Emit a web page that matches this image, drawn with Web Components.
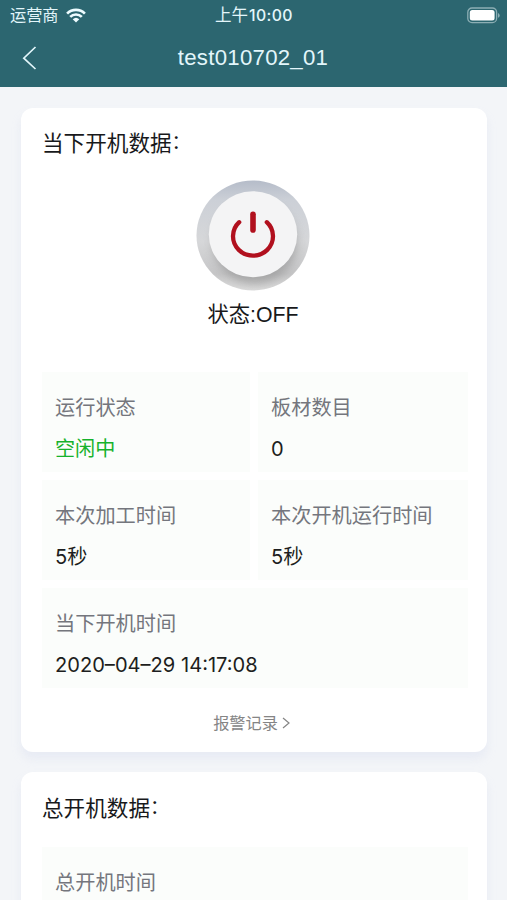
<!DOCTYPE html>
<html lang="zh-CN">
<head>
<meta charset="utf-8">
<meta name="viewport" content="width=device-width">
<title>test010702_01</title>
<style>
html,body{margin:0;height:900px;overflow:hidden;background:#f3f5f8}
body{font-family:Inter,"Noto Sans CJK SC",sans-serif;color:#1b1b1c}
</style>
</head>
<body>
<device-page>
  <status-bar slot="top"></status-bar>
  <nav-bar slot="top">test010702_01</nav-bar>
  <data-card style="height:644px">
    <span slot="title">当下开机数据</span>
    <power-switch>状态:OFF</power-switch>
    <tile-grid>
      <data-tile label="运行状态" style="--value:#16b22c">空闲中</data-tile>
      <data-tile label="板材数目">0</data-tile>
      <data-tile label="本次加工时间">5秒</data-tile>
      <data-tile label="本次开机运行时间">5秒</data-tile>
      <data-tile label="当下开机时间" wide>2020–04–29 14:17:08</data-tile>
    </tile-grid>
    <more-link>报警记录</more-link>
  </data-card>
  <data-card style="height:400px;padding-top:21px">
    <span slot="title">总开机数据</span>
    <tile-grid style="margin-top:24px">
      <data-tile label="总开机时间" wide></data-tile>
    </tile-grid>
  </data-card>
</device-page>
<script>
function define(name, html){
  customElements.define(name, class extends HTMLElement{
    constructor(){
      super();
      const root=this.attachShadow({mode:'open'});
      root.innerHTML=html;
      const label=root.querySelector('.label');
      if(label) label.textContent=this.getAttribute('label');
    }
  });
}
define('device-page',`<style>
:host{display:flex;flex-direction:column;height:900px;overflow:hidden}
header{flex:none;height:87px;background:#2c6670;color:#e3f6fb}
main{display:flex;flex-direction:column;gap:20px;padding:21px 20px 0 21px}
</style><header><slot name="top"></slot></header><main><slot></slot></main>`);
define('status-bar',`<style>
:host{display:grid;grid-template-columns:1fr auto 1fr;align-items:center;height:29px;padding:0 7px 0 10px;font-size:16.2px;line-height:29px}
.l{display:flex;align-items:center;gap:7px}
.t{font-size:15.8px;font-weight:500;letter-spacing:.4px;margin-right:2px}
.t i{font-style:normal;font-weight:400;font-size:16.5px;letter-spacing:0;margin-right:1px}
.l span{padding-top:1px}
.b{justify-self:end;display:block}
svg{display:block}
</style><div class="l"><span>运营商</span><svg width="20" height="15" viewBox="0 0 20 15" fill="none" stroke="#eefcff" stroke-width="2.7"><path d="M1.1 5.6a12.6 12.6 0 0 1 17.8 0M4.2 8.9a8.2 8.2 0 0 1 11.6 0"/><path d="M10 14.6 6.7 11.3a4.8 4.8 0 0 1 6.6 0z" fill="#eefcff" stroke="none"/></svg></div>
<div class="t"><i>上午</i>10:00</div>
<svg class="b" width="33" height="17" viewBox="0 0 33 17"><rect x=".8" y="1" width="28.8" height="14.6" rx="4.2" fill="none" stroke="#8caeb4" stroke-width="1.3"/><rect x="2.8" y="3" width="24.8" height="10.6" rx="2.5" fill="#fff"/><path d="M31 6.1q1.7.6 1.7 2.3T31 10.7z" fill="#8caeb4"/></svg>`);
define('nav-bar',`<style>
:host{display:grid;grid-template-columns:40px 1fr 40px;align-items:center;height:58px;padding:0 1px 0 0;font:22.2px/58px "Liberation Sans",sans-serif}
.n{text-align:center;letter-spacing:.28px}
svg{display:block;margin-left:22px}
</style><svg width="16" height="24" viewBox="0 0 16 24" fill="none" stroke="#e3f6fb" stroke-width="1.7"><path d="M13.5 1 1.8 12.2 13.5 23"/></svg><div class="n"><slot></slot></div>`);
define('data-card',`<style>
:host{display:block;box-sizing:border-box;flex:none;padding:20px 19px 0 21px;background:#fff;border-radius:12px;box-shadow:0 7px 8px rgba(214,219,238,.36)}
h2{margin:0;font-size:21.6px;line-height:30px;font-weight:400;color:#18191b;height:30px}
i{font-style:normal;font-size:19px;vertical-align:2px;line-height:1}
</style><h2><slot name="title"></slot><i>：</i></h2><slot></slot>`);
define('power-switch',`<style>
:host{display:flex;flex-direction:column;align-items:center;height:214px;padding:22px 4px 0 0;box-sizing:border-box;font:21.6px/32px "Noto Sans CJK SC",sans-serif}
svg{display:block;flex:none}
div{margin-top:7px;font-family:"Liberation Sans","Noto Sans CJK SC",sans-serif;font-size:21.3px;color:#18191b}
</style><svg width="114" height="112" viewBox="0 0 114 112">
<defs><linearGradient id="r" x1=".5" y1="0" x2=".5" y2="1"><stop offset="0" stop-color="#b5bcc9"/><stop offset=".18" stop-color="#ccd0d7"/><stop offset=".55" stop-color="#d6d7d9"/><stop offset=".85" stop-color="#c6c6c7"/><stop offset="1" stop-color="#dddddd"/></linearGradient>
<filter id="s" x="-30%" y="-30%" width="160%" height="160%"><feGaussianBlur stdDeviation="5"/></filter><clipPath id="c"><ellipse cx="57" cy="55.5" rx="56.5" ry="55"/></clipPath></defs>
<ellipse cx="57" cy="55.5" rx="56.5" ry="55" fill="url(#r)"/>
<g clip-path="url(#c)"><ellipse cx="59" cy="63" rx="42" ry="41" fill="#858585" opacity=".5" filter="url(#s)"/></g>
<ellipse cx="57" cy="54.2" rx="44.2" ry="43" fill="#f4f4f5"/>
<g fill="none" stroke="#b1101e" stroke-linecap="round"><path d="M43.2 42.2a20 19.4 0 1 0 27.6 0" stroke-width="4.3"/><path d="M57 34.2v15.7" stroke-width="5.6"/></g></svg><div><slot></slot></div>`);
define('tile-grid',`<style>
:host{display:grid;grid-template-columns:208px 210px;grid-auto-rows:100px;gap:8px}
</style><slot></slot>`);
define('data-tile',`<style>
:host{display:flex;flex-direction:column;box-sizing:border-box;padding:21px 13px 0;background:#fbfdfb;gap:11px;white-space:nowrap}
:host([wide]){grid-column:1/-1}
.label{font-size:20.2px;line-height:30px;height:30px;color:#74767d}
.value{font-size:20.1px;line-height:30px;height:30px;color:var(--value,#1d1e20)}
</style><div class="label"></div><div class="value"><slot></slot></div>`);
define('more-link',`<style>
:host{display:flex;align-items:center;justify-content:center;gap:4px;height:30px;margin-top:20px;padding-right:7px;font-size:16.2px;line-height:30px;color:#858585}
svg{display:block}
</style><slot></slot><svg width="8" height="12" viewBox="0 0 8 12" fill="none" stroke="#858585" stroke-width="1.2"><path d="m1 1 6 5-6 5"/></svg>`);
</script>
</body>
</html>
